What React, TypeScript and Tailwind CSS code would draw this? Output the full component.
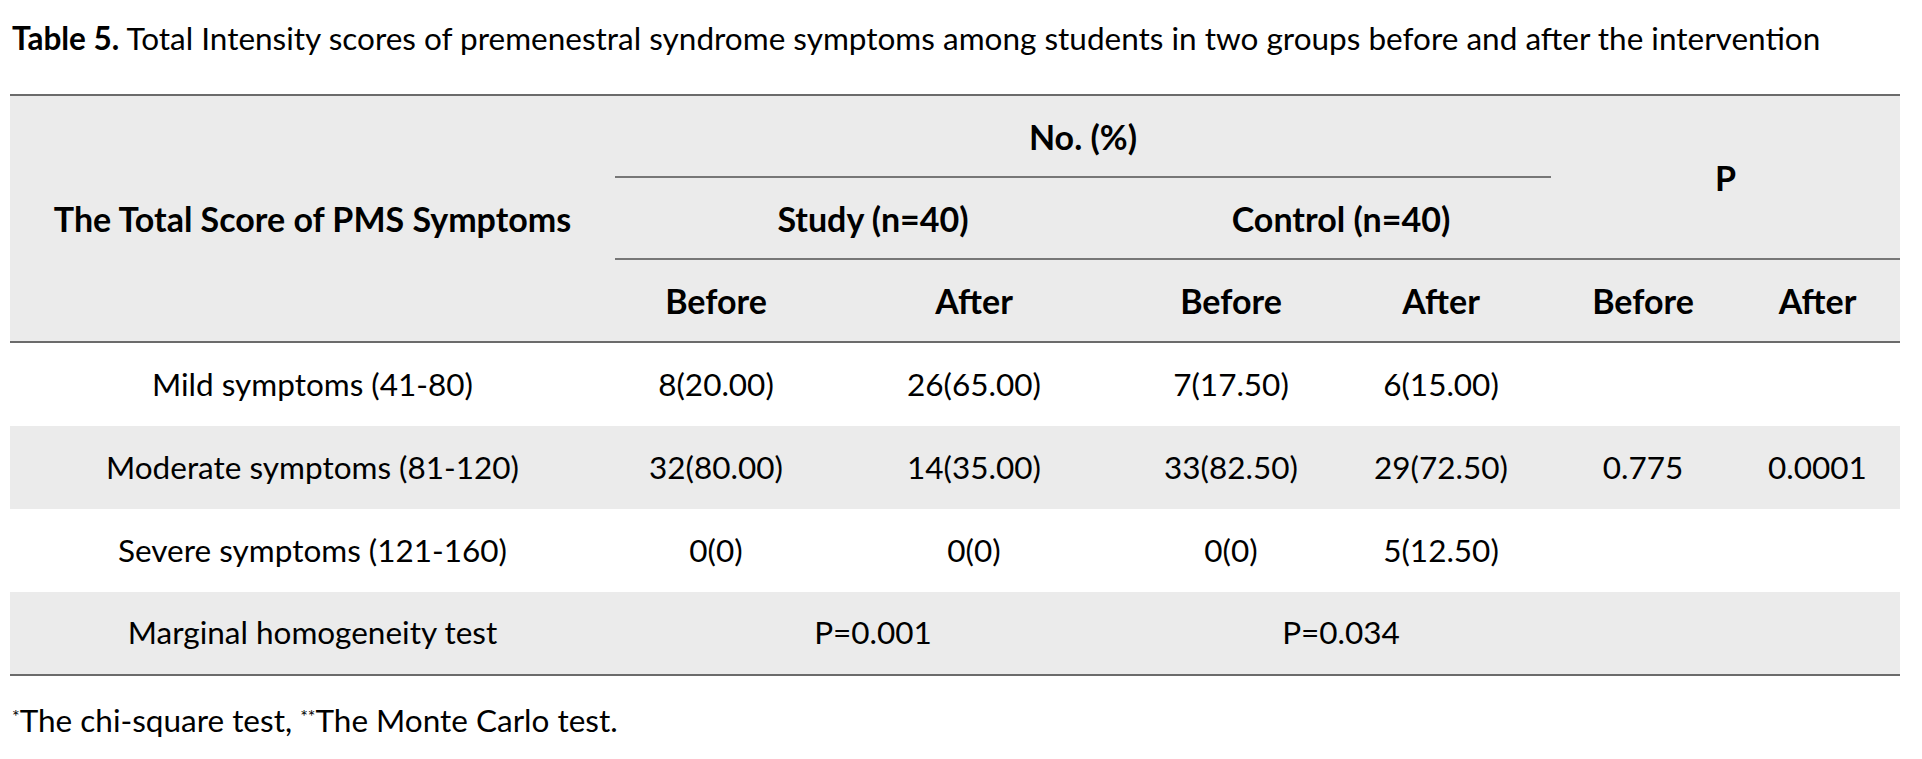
import React from "react";

const font = { fontFamily: "Lato, 'Open Sans', sans-serif" };

export default function App() {
  const cellBase = "flex items-center justify-center";
  const head = "flex items-center justify-center bg-[#ebebeb] font-bold text-[34px]";
  return (
    <div className="w-[1922px] h-[759px] bg-white text-black overflow-hidden" style={font}>
      <div className="pl-[12px] pt-[20px] h-[94px] text-[31.5px] leading-[36px] whitespace-nowrap">
        <span className="font-bold">Table 5.</span> Total Intensity scores of premenestral syndrome symptoms among students in two groups before and after the intervention
      </div>
      <div className="ml-[10px] w-[1890px] grid grid-cols-[605px_202px_314px_200px_220px_184px_165px] grid-rows-[82px_82px_83px_83px_83px_83px_82px] border-t-2 border-b-2 border-[#6b6b6b] text-[31.5px]">
        {/* header */}
        <div className={`${head} col-start-1 row-start-1 row-span-3 border-b-2 border-[#6b6b6b]`}>
          The Total Score of PMS Symptoms
        </div>
        <div className={`${head} col-start-2 col-span-4 row-start-1 border-b-2 border-[#777777]`}>
          No. (%)
        </div>
        <div className={`${head} col-start-6 col-span-2 row-start-1 row-span-2 border-b-2 border-[#777777]`}>
          P
        </div>
        <div className={`${head} col-start-2 col-span-2 row-start-2 border-b-2 border-[#777777]`}>
          Study (n=40)
        </div>
        <div className={`${head} col-start-4 col-span-2 row-start-2 border-b-2 border-[#777777]`}>
          Control (n=40)
        </div>
        {["Before", "After", "Before", "After", "Before", "After"].map((t, i) => (
          <div key={i} className={`${head} row-start-3 border-b-2 border-[#6b6b6b]`}>
            {t}
          </div>
        ))}
        {/* body */}
        {[
          ["Mild symptoms (41-80)", "8(20.00)", "26(65.00)", "7(17.50)", "6(15.00)", "", ""],
          ["Moderate symptoms (81-120)", "32(80.00)", "14(35.00)", "33(82.50)", "29(72.50)", "0.775", "0.0001"],
          ["Severe symptoms (121-160)", "0(0)", "0(0)", "0(0)", "5(12.50)", "", ""],
        ].map((row, r) =>
          row.map((c, i) => (
            <div key={`${r}-${i}`} className={`${cellBase} ${r === 1 ? "bg-[#ebebeb]" : "bg-white"}`}>
              {c}
            </div>
          ))
        )}
        <div className={`${cellBase} bg-[#ebebeb]`}>Marginal homogeneity test</div>
        <div className={`${cellBase} col-span-2 bg-[#ebebeb]`}>P=0.001</div>
        <div className={`${cellBase} col-span-2 bg-[#ebebeb]`}>P=0.034</div>
        <div className={`${cellBase} col-span-2 bg-[#ebebeb]`}></div>
      </div>
      <div className="pl-[12px] pt-[26px] text-[31.5px] leading-[36px]">
        <sup className="text-[18px]">*</sup>The chi-square test, <sup className="text-[18px]">**</sup>The Monte Carlo test.
      </div>
    </div>
  );
}
